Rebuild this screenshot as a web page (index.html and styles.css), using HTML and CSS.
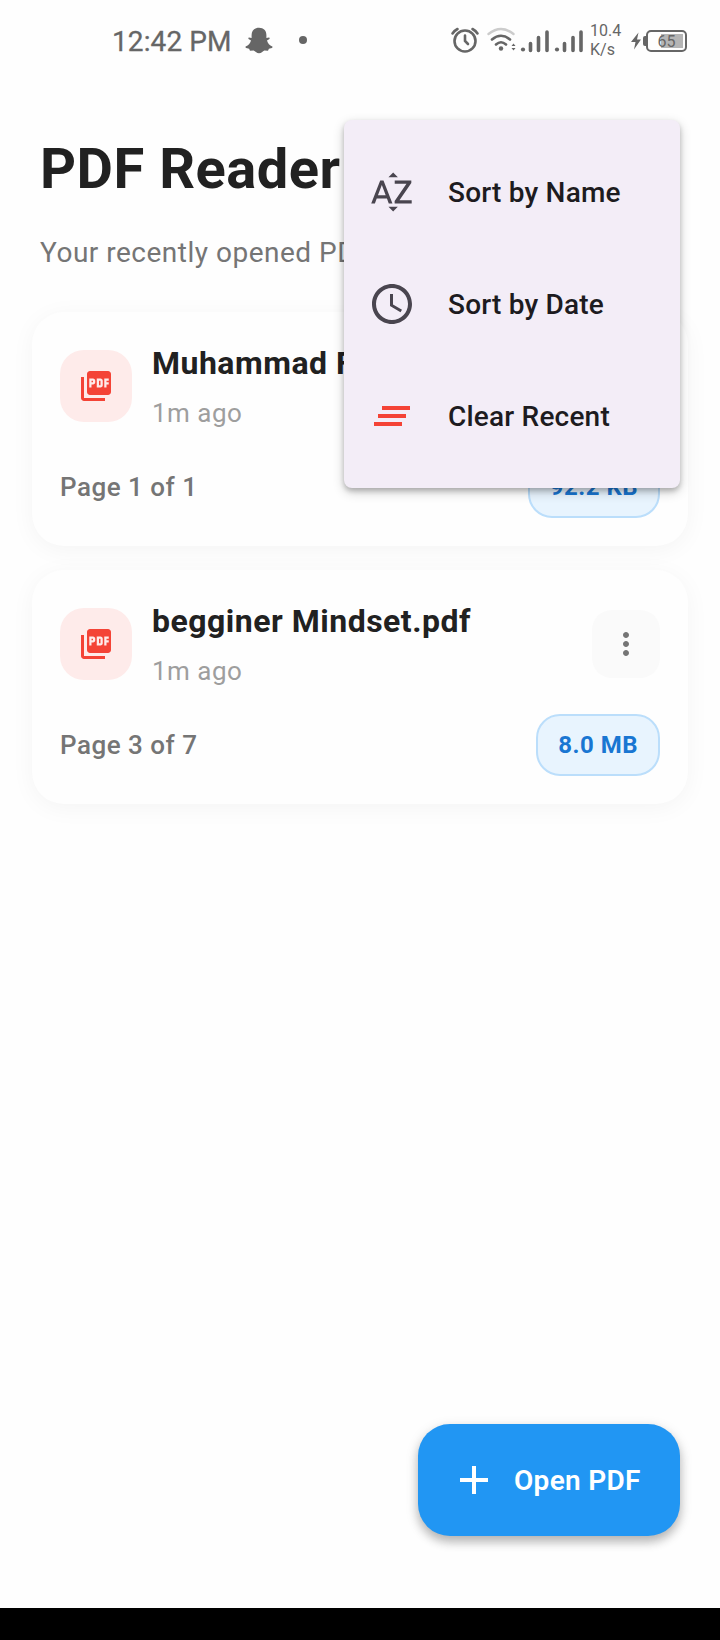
FILE: index.html
```
<!DOCTYPE html>
<html lang="en">
<head>
<meta charset="utf-8">
<title>PDF Reader</title>
<link rel="stylesheet" href="styles.css">
</head>
<body>
<div class="screen">
  <div class="status">
    <span class="clock">12:42 PM</span>
    <svg class="ghost" width="28" height="28" viewBox="0 0 28 28"><path d="M14 .8c4.700 0 7.400 3 7.400 7.200v3l2.600-.5c.9.300.9 1.300.1 1.800L22 13.600c.8 3 2.600 5 5.300 5.900.5.500.2 1-.4 1.400l-3 .9-.9 1.900-3.600-.1c-1.800.8-3 2.700-5.400 2.700s-3.600-1.900-5.400-2.700L5 23.700l-.9-1.900-3-.9c-.6-.4-.9-.9-.4-1.400 2.700-.9 4.500-2.900 5.300-5.900l-2.100-1.300c-.8-.5-.8-1.500.1-1.800l2.600.5V8C6.600 3.800 9.300.8 14 .8z"/></svg>
    <span class="dot"></span>
    <svg class="tray" width="140" height="40" viewBox="448 20 140 40">
      <g fill="none" stroke="#666" stroke-linecap="round">
        <circle cx="465" cy="41" r="10.500" stroke-width="2.600"/>
        <path d="M465 35.500v5.500l3 3" stroke-width="2.600"/>
        <path d="M452.500 33.500q2-3 5-4.500M477.500 33.500q-2-3-5-4.500" stroke-width="2.600"/>
        <path d="M488.500 34q12.500-10 25 0" stroke="#ccc" stroke-width="2.400"/>
        <path d="M492 39.500q9-7.500 18 0M496 44.500q5-4.500 10 0" stroke-width="2.600"/>
        <path d="M530.500 43.500v7M538.500 37.500v13M547 32v18.500M564.500 43.500v7M573 37.500v13M581 32v18.500" stroke-width="3.600"/>
      </g>
      <g fill="#666"><circle cx="501" cy="48.500" r="2.200"/><circle cx="523" cy="49.500" r="2.100"/><circle cx="557" cy="49.500" r="2.100"/><path d="M511.500 46l2-2.500 2 2.500zM511.500 48l2 2.500 2-2.500z"/></g>
    </svg>
    <span class="rate">10.4<br>K/s</span>
    <svg class="bolt" width="14" height="20" viewBox="0 0 14 20"><path d="M8.500 1.500 1 11h4.500L4 18.500 11 8.500H7z"/></svg>
    <span class="nub"></span>
    <span class="battery"><span class="level"></span><span class="percent">65</span></span>
  </div>

  <div class="heading">
    <h1>PDF Reader</h1>
    <p>Your recently opened PDFs</p>
  </div>

  <div class="list">
    <div class="card">
      <div class="top">
        <div class="tile"><svg width="36" height="36" viewBox="0 0 24 24"><path d="M20 2H8c-1.100 0-2 .9-2 2v12c0 1.100.9 2 2 2h12c1.100 0 2-.9 2-2V4c0-1.100-.9-2-2-2zm-8.500 7.500c0 .83-.67 1.500-1.500 1.500H9v2H7.500V7H10c.83 0 1.500.67 1.500 1.500v1zm5 2c0 .83-.67 1.500-1.500 1.500h-2.500V7H15c.83 0 1.500.67 1.500 1.500v3zm4-3H19v1h1.500V11H19v2h-1.500V7h3v1.500zM9 9.500h1v-1H9v1zM4 6H2v14c0 1.100.9 2 2 2h14v-2H4V6zm10 5.500h1v-3h-1v3z"/></svg></div>
        <div class="names"><div class="name">Muhammad F</div><div class="ago">1m ago</div></div>
        <div class="more"><svg width="36" height="36" viewBox="0 0 24 24"><path d="M12 8c1.100 0 2-.9 2-2s-.9-2-2-2-2 .9-2 2 .9 2 2 2zm0 2c-1.100 0-2 .9-2 2s.9 2 2 2 2-.9 2-2-.9-2-2-2zm0 6c-1.100 0-2 .9-2 2s.9 2 2 2 2-.9 2-2-.9-2-2-2z"/></svg></div>
      </div>
      <div class="bottom"><span class="page">Page 1 of 1</span><span class="size">92.2 KB</span></div>
    </div>
    <div class="card">
      <div class="top">
        <div class="tile"><svg width="36" height="36" viewBox="0 0 24 24"><path d="M20 2H8c-1.100 0-2 .9-2 2v12c0 1.100.9 2 2 2h12c1.100 0 2-.9 2-2V4c0-1.100-.9-2-2-2zm-8.500 7.500c0 .83-.67 1.500-1.500 1.500H9v2H7.500V7H10c.83 0 1.500.67 1.500 1.500v1zm5 2c0 .83-.67 1.500-1.500 1.500h-2.500V7H15c.83 0 1.500.67 1.500 1.500v3zm4-3H19v1h1.500V11H19v2h-1.500V7h3v1.500zM9 9.500h1v-1H9v1zM4 6H2v14c0 1.100.9 2 2 2h14v-2H4V6zm10 5.500h1v-3h-1v3z"/></svg></div>
        <div class="names"><div class="name">begginer Mindset.pdf</div><div class="ago">1m ago</div></div>
        <div class="more"><svg width="36" height="36" viewBox="0 0 24 24"><path d="M12 8c1.100 0 2-.9 2-2s-.9-2-2-2-2 .9-2 2 .9 2 2 2zm0 2c-1.100 0-2 .9-2 2s.9 2 2 2 2-.9 2-2-.9-2-2-2zm0 6c-1.100 0-2 .9-2 2s.9 2 2 2 2-.9 2-2-.9-2-2-2z"/></svg></div>
      </div>
      <div class="bottom"><span class="page">Page 3 of 7</span><span class="size">8.0 MB</span></div>
    </div>
  </div>

  <div class="navbar"></div>

  <div class="menu">
    <div class="item"><svg width="48" height="48" viewBox="0 0 24 24"><path d="M14.940 4.660h-4.720l2.360-2.360zm-4.690 14.710h4.660l-2.330 2.330zM6.100 6.270L1.600 17.730h1.840l.92-2.450h5.110l.92 2.450h1.840L7.740 6.270H6.100zm-1.130 7.370l1.940-5.180 1.940 5.180H4.970zm10.760 2.500h6.120v1.590h-8.530v-1.290l5.920-8.560h-5.880v-1.600h8.300v1.260l-5.930 8.600z"/></svg><span>Sort by Name</span></div>
    <div class="item"><svg width="48" height="48" viewBox="0 0 24 24"><path d="M11.990 2C6.470 2 2 6.480 2 12s4.470 10 9.990 10C17.520 22 22 17.520 22 12S17.520 2 11.990 2zM12 20c-4.420 0-8-3.580-8-8s3.580-8 8-8 8 3.580 8 8-3.580 8-8 8zm.5-13H11v6l5.250 3.150.75-1.230-4.500-2.670z"/></svg><span>Sort by Date</span></div>
    <div class="item danger"><svg width="48" height="48" viewBox="0 0 24 24"><path d="M5 13h14v-2H5v2zm-2 4h14v-2H3v2zM7 7v2h14V7H7z"/></svg><span>Clear Recent</span></div>
  </div>

  <div class="fab"><svg width="48" height="48" viewBox="0 0 24 24"><path d="M19 13h-6v6h-2v-6H5v-2h6V5h2v6h6v2z"/></svg><span>Open PDF</span></div>
</div>
</body>
</html>
```
FILE: styles.css
```
* { box-sizing: border-box; }
body { margin: 0; background: #fefefe; font-family: Roboto, "Liberation Sans", sans-serif; }
svg { display: block; flex: none; }
.screen { position: relative; width: 720px; height: 1640px; display: flex; flex-direction: column; overflow: hidden; }

.status { height: 120px; flex: none; display: flex; align-items: flex-start; padding-left: 112px; color: #666; }
.status > * { flex: none; }
.clock { width: 133px; margin-top: 25px; font-size: 28px; line-height: 33px; letter-spacing: .1px; font-weight: 450; white-space: nowrap; -webkit-text-stroke: .3px #666; }
.ghost { margin-top: 27px; fill: #666; }
.dot { width: 8px; height: 8px; margin: 36px 0 0 26px; border-radius: 50%; background: #666; }
.tray { margin: 20px 0 0 141px; }
.rate { width: 42px; margin: 21px 0 0 2px; font-size: 16px; line-height: 19px; }
.bolt { margin: 31px 0 0 -2px; fill: #666; }
.nub { width: 3px; height: 10px; margin: 36px 0 0 -1px; border-radius: 2px 0 0 2px; background: #666; }
.battery { position: relative; width: 41px; height: 22px; margin: 30px 0 0 0; border: 2px solid #666; border-radius: 5px; display: flex; justify-content: center; }
.level { position: absolute; right: 2px; top: 2px; width: 22px; height: 14px; background: #b5b5b5; }
.percent { position: relative; font-size: 16px; line-height: 19px; }

.heading { height: 192px; flex: none; padding: 13px 40px 0; }
h1 { margin: 0; font-size: 56px; line-height: 72px; font-weight: 700; letter-spacing: .5px; color: #212121; white-space: nowrap; }
p { margin: 28px 0 0; font-size: 28px; line-height: 40px; letter-spacing: .5px; color: #757575; white-space: nowrap; }

.list { flex: 1; display: flex; flex-direction: column; gap: 24px; padding: 0 32px; }
.card { height: 234px; padding: 28px; display: flex; flex-direction: column; gap: 24px; border-radius: 32px; background: #fefefe; box-shadow: 0 4px 24px rgba(0,0,0,.045); }
.top { height: 92px; display: flex; align-items: center; }
.tile { width: 72px; height: 72px; display: flex; align-items: center; justify-content: center; border-radius: 24px; background: #feebea; }
.tile svg { fill: #f44336; }
.names { flex: 1; margin-left: 20px; white-space: nowrap; }
.name { height: 46px; margin-bottom: 8px; font-size: 32px; line-height: 46px; font-weight: 700; letter-spacing: .5px; color: #212121; }
.ago { height: 38px; font-size: 26px; line-height: 38px; letter-spacing: .5px; color: #9e9e9e; }
.more { width: 68px; height: 68px; display: flex; align-items: center; justify-content: center; border-radius: 20px; background: #fafafa; }
.more svg { fill: #757575; }
.bottom { height: 62px; display: flex; align-items: center; justify-content: space-between; }
.page { font-size: 26px; line-height: 38px; font-weight: 500; letter-spacing: .5px; color: #757575; }
.size { padding: 12px 20px; border: 2px solid #bbdefb; border-radius: 24px; background: #e8f4fe; font-size: 24px; line-height: 34px; font-weight: 700; letter-spacing: .5px; color: #1976d2; }

.navbar { height: 32px; flex: none; background: #000; }

.menu { position: absolute; left: 344px; top: 120px; width: 336px; padding: 16px 0; border-radius: 8px; background: #f3edf7; box-shadow: 0 3px 5px rgba(0,0,0,.2), 0 4px 12px rgba(0,0,0,.2); }
.item { height: 112px; display: flex; align-items: center; gap: 32px; padding: 0 24px; font-size: 28px; line-height: 40px; font-weight: 500; letter-spacing: .2px; color: #1d1b20; white-space: nowrap; }
.item span { padding-top: 2px; }
.item svg { fill: #49454f; }
.danger svg { fill: #f44336; }

.fab { position: absolute; left: 418px; top: 1424px; width: 262px; height: 112px; padding-left: 32px; display: flex; align-items: center; gap: 16px; border-radius: 32px; background: #2196f3; box-shadow: 0 6px 10px rgba(0,0,0,.2), 0 4px 14px rgba(0,0,0,.14); color: #fff; font-size: 28px; line-height: 40px; font-weight: 600; letter-spacing: .3px; white-space: nowrap; }
.fab span { padding-top: 2px; }
.fab svg { fill: #fff; }
```
